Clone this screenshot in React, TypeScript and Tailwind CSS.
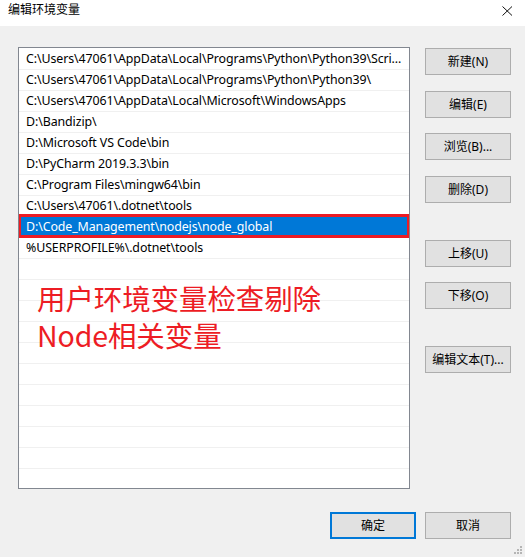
import React from 'react';

const rows = [
  'C:\\Users\\47061\\AppData\\Local\\Programs\\Python\\Python39\\Scri...',
  'C:\\Users\\47061\\AppData\\Local\\Programs\\Python\\Python39\\',
  'C:\\Users\\47061\\AppData\\Local\\Microsoft\\WindowsApps',
  'D:\\Bandizip\\',
  'D:\\Microsoft VS Code\\bin',
  'D:\\PyCharm 2019.3.3\\bin',
  'C:\\Program Files\\mingw64\\bin',
  'C:\\Users\\47061\\.dotnet\\tools',
  'D:\\Code_Management\\nodejs\\node_global',
  '%USERPROFILE%\\.dotnet\\tools',
];

const SELECTED = 8;
const TOTAL_ROWS = 21;

const sideButtons = [
  { label: '新建(N)', mt: 'mt-0' },
  { label: '编辑(E)', mt: 'mt-[16px]' },
  { label: '浏览(B)...', mt: 'mt-[15px]' },
  { label: '删除(D)', mt: 'mt-[16px]' },
  { label: '上移(U)', mt: 'mt-[37px]' },
  { label: '下移(O)', mt: 'mt-[15px]' },
  { label: '编辑文本(T)...', mt: 'mt-[37px]' },
];

export default function App() {
  const list = Array.from({ length: TOTAL_ROWS }, (_, i) => rows[i] ?? '');

  return (
    <div className="relative w-[525px] h-[557px] overflow-hidden bg-[#f0f0f0] text-[12px] text-black font-['Noto_Sans','Noto_Sans_CJK_SC',sans-serif]">
      {/* Title bar */}
      <div className="flex h-[26px] items-start justify-between bg-white pl-[8px] pr-[12px]">
        <span className="pt-[2px] leading-[16px]">编辑环境变量</span>
        <svg width="11" height="10" viewBox="0 0 11 10" className="mt-[6px]">
          <path d="M0.5 0.5 L10 9.5 M10 0.5 L0.5 9.5" stroke="#111" strokeWidth="1" fill="none" />
        </svg>
      </div>

      {/* Main area */}
      <div className="flex pl-[18px] pt-[21px]">
        <div className="relative h-[442px] w-[392px] border border-[#828790] bg-white pt-[1px] text-[12.4px] tracking-[-0.1px]">
          <div className="h-full overflow-hidden">
            {list.map((text, i) => (
              <div
                key={i}
                className={
                  i === SELECTED
                    ? 'relative h-[21px] border-b border-[#f0f0f0] bg-[#0078d7] pl-[7px] leading-[20px] text-white'
                    : 'h-[21px] border-b border-[#f0f0f0] pl-[7px] leading-[20px] whitespace-nowrap'
                }
              >
                {text}
                {i === SELECTED && (
                  <div className="absolute -top-[3px] -left-[1px] -right-[1px] -bottom-[1px] border-[3px] border-[#ed1c24]" />
                )}
              </div>
            ))}
          </div>

          {/* Red annotation */}
          <div className="absolute left-[18px] top-[231px] text-[28.5px] leading-[37px] text-[#ed1c24] font-['Noto_Sans_CJK_SC',sans-serif]">
            <div>用户环境变量检查剔除</div>
            <div>Node相关变量</div>
          </div>
        </div>

        <div className="ml-[15px] flex w-[86px] flex-col pt-[1px]">
          {sideButtons.map((b) => (
            <button
              key={b.label}
              className={`${b.mt} h-[27px] w-[86px] border border-[#adadad] bg-[#e1e1e1] leading-[25px]`}
            >
              {b.label}
            </button>
          ))}
        </div>
      </div>

      {/* Bottom buttons */}
      <div className="mt-[23px] flex justify-end gap-[9px] pr-[14px]">
        <button className="h-[27px] w-[86px] border-2 border-[#0078d7] bg-[#e1e1e1] leading-[23px]">确定</button>
        <button className="h-[27px] w-[86px] border border-[#adadad] bg-[#e1e1e1] leading-[25px]">取消</button>
      </div>

      {/* Resize grip */}
      <svg width="10" height="10" viewBox="0 0 10 10" className="absolute right-[2px] bottom-[2px]">
        <rect x="7" y="1" width="2" height="2" fill="#b5b5b5" />
        <rect x="4" y="4" width="2" height="2" fill="#b5b5b5" />
        <rect x="7" y="4" width="2" height="2" fill="#b5b5b5" />
        <rect x="1" y="7" width="2" height="2" fill="#b5b5b5" />
        <rect x="4" y="7" width="2" height="2" fill="#b5b5b5" />
        <rect x="7" y="7" width="2" height="2" fill="#b5b5b5" />
      </svg>
    </div>
  );
}
